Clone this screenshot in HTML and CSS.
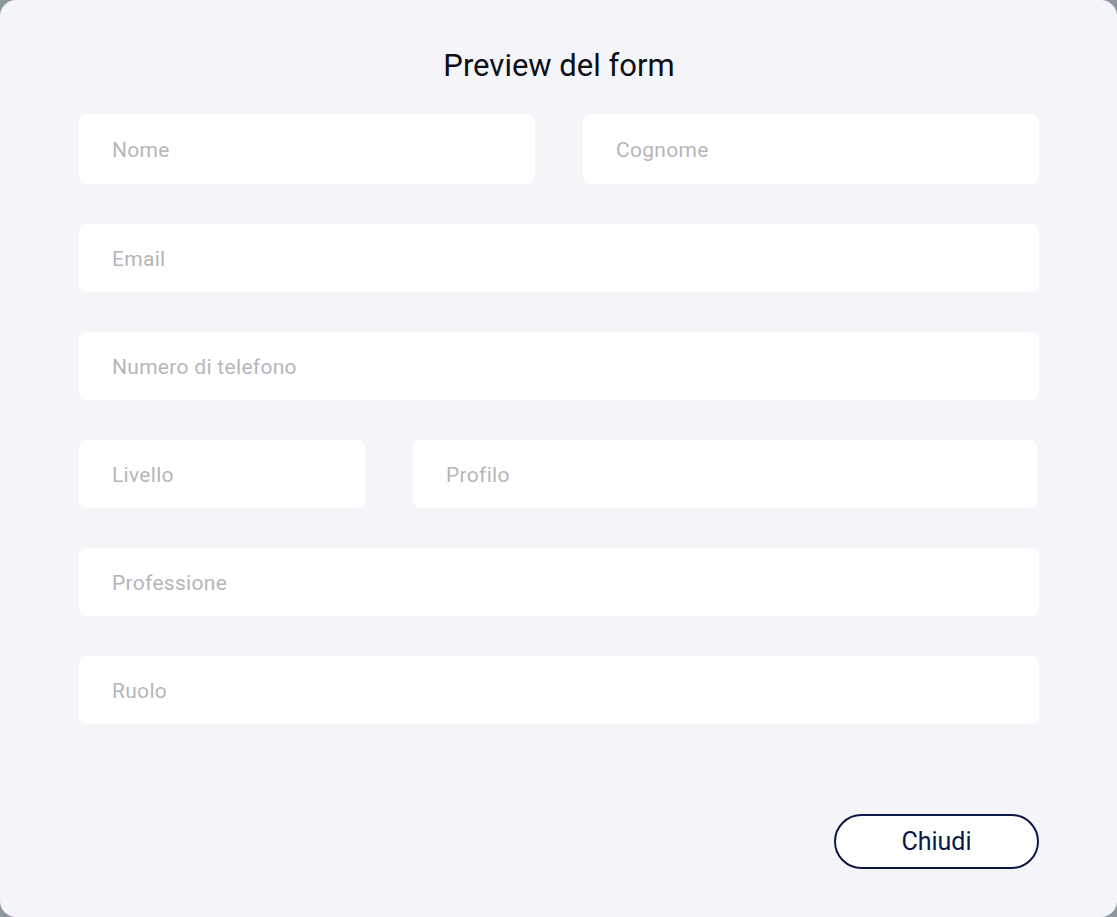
FILE: index.html
```html
<!DOCTYPE html>
<html lang="it">
<head>
  <meta charset="UTF-8" />
  <meta name="viewport" content="width=device-width, initial-scale=1.0"/>
  <title>Preview del form</title>
  <link rel="stylesheet" href="styles.css">
</head>
<body>
  <div class="modal">
    <h2>Preview del form</h2>
    <form class="preview-form">
      <div class="row row-top">
        <input type="text" placeholder="Nome" />
        <input type="text" placeholder="Cognome" />
      </div>
      <input type="email" placeholder="Email" />
      <input type="tel" placeholder="Numero di telefono" />
      <div class="row row-split">
        <input type="text" class="small" placeholder="Livello" />
        <input type="text" class="wide" placeholder="Profilo" />
      </div>
      <input type="text" placeholder="Professione" />
      <input type="text" placeholder="Ruolo" />
    </form>
    <div class="actions">
      <button type="button">Chiudi</button>
    </div>
  </div>
</body>
</html>
```
FILE: styles.css
```css
body {
  font-family: Roboto, "Noto Sans", sans-serif;
  background-color: #8e979e;
  margin: 0;
  padding: 0;
  height: 100vh;
}
.modal {
  background-color: #f4f5f9;
  border-radius: 16px;
  height: 100vh;
  box-sizing: border-box;
  padding: 48px 78px 48px 79px;
  display: flex;
  flex-direction: column;
}
.modal h2 {
  margin: 0 0 30px;
  text-align: center;
  font-size: 31px;
  font-weight: 400;
  line-height: 36px;
  color: #0d0f14;
}
.preview-form {
  display: flex;
  flex-direction: column;
  gap: 40px;
}
.preview-form .row {
  display: flex;
  gap: 48px;
}
.preview-form .row input {
  flex: 1;
  min-width: 0;
}
.preview-form .row-top input {
  height: 70px;
}
.preview-form .row-split .small {
  flex: 0 0 286px;
}
.preview-form .row-split .wide {
  flex: 0 0 624px;
}
.preview-form input {
  height: 68px;
  box-sizing: border-box;
  padding: 2px 32px 0 33px;
  border: none;
  border-radius: 8px;
  background-color: #fff;
  font-family: inherit;
  font-size: 21px;
  letter-spacing: 0.3px;
  color: #333;
  outline: none;
}
.preview-form input::placeholder {
  color: #b4b6ba;
}
.actions {
  margin-top: auto;
  display: flex;
  justify-content: flex-end;
}
.actions button {
  width: 205px;
  height: 55px;
  background-color: #fff;
  border: 2px solid #0b1747;
  border-radius: 28px;
  color: #0b1747;
  font-family: inherit;
  font-size: 25px;
  cursor: pointer;
}
```
